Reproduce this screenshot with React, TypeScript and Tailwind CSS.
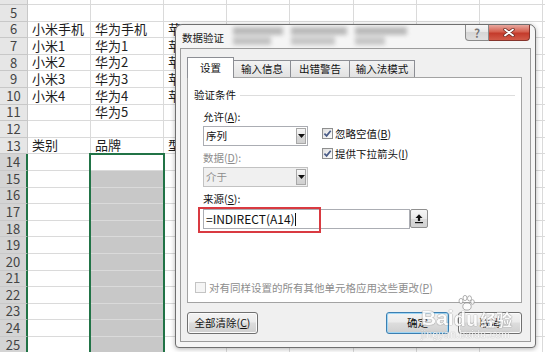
import React from 'react';

type Row = { n: number; a?: string; b?: string; c?: string };

// column C sits under the dialog, only the first glyph shows
const rows: Row[] = [
  { n: 5 },
  { n: 6, a: '小米手机', b: '华为手机', c: '苹' },
  { n: 7, a: '小米1', b: '华为1', c: '苹' },
  { n: 8, a: '小米2', b: '华为2', c: '苹' },
  { n: 9, a: '小米3', b: '华为3', c: '苹' },
  { n: 10, a: '小米4', b: '华为4', c: '苹' },
  { n: 11, b: '华为5' },
  { n: 12 },
  { n: 13, a: '类别', b: '品牌', c: '型' },
  { n: 14 }, { n: 15 }, { n: 16 }, { n: 17 }, { n: 18 }, { n: 19 },
  { n: 20 }, { n: 21 }, { n: 22 }, { n: 23 }, { n: 24 }, { n: 25 },
];

// columns D..I, all empty
const restCols = ['w-[63px]', 'w-[64px]', 'w-[63px]', 'w-[63px]', 'w-[63px]', 'w-[63px]'];

const cjk = "font-['Noto_Sans_CJK_SC','Noto_Sans',sans-serif]";

const Cell: React.FC<{ w: string; text?: string; fill?: boolean }> = ({ w, text, fill }) => (
  <div
    className={`${w} shrink-0 h-full border-r border-b border-[#dadada] flex items-end pl-[4px] whitespace-nowrap text-[13px] leading-[16px] text-[#1e1e1e] ${fill ? 'bg-[#c8c8c8]' : ''}`}
  >
    {text}
  </div>
);

const Dropdown: React.FC<{ text: string; disabled?: boolean }> = ({ text, disabled }) => (
  <div
    className={`h-[20px] w-[105px] flex border ${disabled ? 'border-[#c2c2c2] bg-[#f0f0f0] text-[#8d8d8d]' : 'border-[#abadb3] bg-white text-[#111]'}`}
  >
    <div className="flex-1 flex items-center pl-[2px] leading-[14px]">{text}</div>
    <div className="my-px mr-px w-[10px] border border-[#a8a8a8] bg-[linear-gradient(#f6f6f6,#e8e8e8_50%,#d9d9d9_50%,#d0d0d0)] flex items-center justify-center">
      <svg width="7" height="4" viewBox="0 0 7 4">
        <path d="M0 0H7L3.5 4Z" fill="#111" />
      </svg>
    </div>
  </div>
);

const Check: React.FC<{ checked?: boolean; disabled?: boolean }> = ({ checked, disabled }) => (
  <div
    className={`w-[11px] h-[11px] shrink-0 border flex items-center justify-center ${disabled ? 'border-[#c4c4c4] bg-[#f5f5f5]' : 'border-[#8e8f8f] bg-[linear-gradient(135deg,#dedede,#ffffff)]'}`}
  >
    {checked && (
      <svg width="9" height="9" viewBox="0 0 9 9">
        <path d="M1.4 4.6L3.6 6.9L7.7 1.7" fill="none" stroke="#4b5d88" strokeWidth="1.7" />
      </svg>
    )}
  </div>
);

const btnBg = 'bg-[linear-gradient(#f3f3f3,#ebebeb_45%,#dddddd_50%,#cfcfcf)]';

const App: React.FC = () => {
  return (
    <div className={`relative w-[545px] h-[352px] overflow-hidden bg-white ${cjk}`}>
      {/* spreadsheet */}
      <div className="flex flex-col">
        <div className="flex h-[5px]">
          <div className="w-[28px] shrink-0 h-full bg-[#e6e6e6] border-r border-b border-[#c8c8c8]" />
          <Cell w="w-[63px]" />
          <Cell w="w-[73px]" />
          <Cell w="w-[63px]" />
          {restCols.map((w, i) => (
            <Cell key={i} w={w} />
          ))}
        </div>
        {rows.map((r) => {
          const sel = r.n >= 14;
          return (
            <div key={r.n} className="flex h-[16.6px]">
              <div
                className={`w-[28px] shrink-0 h-full border-b border-[#c8c8c8] flex items-center justify-center text-[13px] leading-[16px] text-[#444] ${sel ? 'bg-[#d4d4d4] border-r-2 border-r-[#217346]' : 'bg-[#e6e6e6] border-r'}`}
              >
                {r.n}
              </div>
              <Cell w="w-[63px]" text={r.a} />
              <Cell w="w-[73px]" text={r.b} fill={r.n >= 15} />
              <Cell w="w-[63px]" text={r.c} />
              {restCols.map((w, i) => (
                <Cell key={i} w={w} />
              ))}
            </div>
          );
        })}
      </div>

      {/* selection B14:B25 */}
      <div className="absolute left-[89px] top-[153px] w-[76px] h-[220px] border-2 border-[#217346]" />

      {/* data validation dialog */}
      <div className="absolute left-[175px] top-[24px] w-[361px] h-[324px] rounded-t-[7px] rounded-b-[4px] border border-[#6f6f6f] bg-[#f5f5f5] shadow-[0_1px_5px_rgba(0,0,0,0.3)] flex flex-col text-[10.5px] text-[#111]">
        <div className="h-[23px] flex items-start">
          <span className="mt-[6px] ml-[6px] leading-[14px] text-[10.5px] text-[#1a1a1a]">数据验证</span>
          <div className="ml-[9px] mt-[2px] flex gap-[8px] opacity-55">
            <div className="flex flex-col gap-[2px] blur-[2px]">
              <div className="h-[8px] w-[50px] bg-[#8a8a8a]" />
              <div className="h-[8px] w-[38px] bg-[#9a9a9a]" />
            </div>
            <div className="flex flex-col gap-[2px] blur-[2px]">
              <div className="h-[8px] w-[56px] bg-[#8a8a8a]" />
              <div className="h-[8px] w-[44px] bg-[#a0a0a0]" />
            </div>
            <div className="flex flex-col gap-[2px] blur-[2px]">
              <div className="h-[8px] w-[52px] bg-[#8a8a8a]" />
              <div className="h-[8px] w-[30px] bg-[#a0a0a0]" />
            </div>
          </div>
          <div className="ml-auto mr-[5px] flex">
            <div className="w-[24px] h-[16px] border border-t-0 border-[#8a8a8a] rounded-bl-[4px] bg-[linear-gradient(#f7f7f7,#e6e6e6_50%,#d6d6d6_50%,#e0e0e0)] flex items-center justify-center">
              <span className="text-[12px] leading-[12px] font-bold text-[#777] [text-shadow:0_0_1px_#fff]">?</span>
            </div>
            <div className="w-[41px] h-[16px] border border-t-0 border-l-0 border-[#86342c] rounded-br-[4px] bg-[linear-gradient(#e8a89f,#d5604f_45%,#c43b2b_55%,#d25a48)] flex items-center justify-center">
              <svg width="12" height="9" viewBox="0 0 12 9">
                <path d="M2 1.5L10 7.5M10 1.5L2 7.5" stroke="#6b2a22" strokeWidth="3.4" strokeLinecap="round" />
                <path d="M2 1.5L10 7.5M10 1.5L2 7.5" stroke="#ffffff" strokeWidth="1.8" strokeLinecap="round" />
              </svg>
            </div>
          </div>
        </div>

        <div className="mx-[4px] h-[294px] border border-[#9b9b9b] bg-[#f0f0f0] pt-[8px] pl-[6px]">
          {/* tabs */}
          <div className="flex items-end h-[20px]">
            <div className="relative z-10 -mb-px w-[47px] h-[21px] border border-b-0 border-[#8c8e94] bg-white flex items-center justify-center leading-[14px]">
              设置
            </div>
            <div className="-ml-px w-[58px] h-[17px] border border-b-0 border-[#8c8e94] bg-[linear-gradient(#f3f3f3,#e2e2e2)] flex items-center justify-center leading-[14px]">
              输入信息
            </div>
            <div className="-ml-px w-[60px] h-[17px] border border-b-0 border-[#8c8e94] bg-[linear-gradient(#f3f3f3,#e2e2e2)] flex items-center justify-center leading-[14px]">
              出错警告
            </div>
            <div className="-ml-px w-[66px] h-[17px] border border-b-0 border-[#8c8e94] bg-[linear-gradient(#f3f3f3,#e2e2e2)] flex items-center justify-center leading-[14px]">
              输入法模式
            </div>
          </div>

          {/* tab panel */}
          <div className="w-[335px] h-[226px] border border-[#a3a3a3] bg-white flex flex-col">
            <div className="mt-[10px] h-[14px] pl-[6px] flex items-center">
              <span className="leading-[14px]">验证条件</span>
              <div className="flex-1 h-px bg-[#dddddd] ml-[4px] mr-[6px]" />
            </div>

            <div className="flex pl-[15px] mt-[8px]">
              <div className="w-[105px] flex flex-col">
                <div className="h-[14px] leading-[14px]">
                  允许(<span className="underline">A</span>):
                </div>
                <div className="mt-[2px]">
                  <Dropdown text="序列" />
                </div>
                <div className="mt-[5px] h-[14px] leading-[14px] text-[#8d8d8d]">
                  数据(<span className="underline">D</span>):
                </div>
                <div className="mt-[2px]">
                  <Dropdown text="介于" disabled />
                </div>
                <div className="mt-[5px] h-[14px] leading-[14px]">
                  来源(<span className="underline">S</span>):
                </div>
              </div>
              <div className="ml-[14px] pt-[18px] flex flex-col">
                <div className="flex items-center h-[11px]">
                  <Check checked />
                  <span className="ml-[2px] leading-[14px]">
                    忽略空值(<span className="underline">B</span>)
                  </span>
                </div>
                <div className="mt-[9px] flex items-center h-[11px]">
                  <Check checked />
                  <span className="ml-[2px] leading-[14px]">
                    提供下拉箭头(<span className="underline">I</span>)
                  </span>
                </div>
              </div>
            </div>

            <div className="relative mt-[3px] pl-[15px] flex items-start">
              <div className="w-[207px] h-[20px] border border-[#abadb3] bg-white flex items-center pl-[2px] text-[12px] leading-[14px] text-[#111]">
                =INDIRECT(A14)
                <span className="w-px h-[13px] bg-[#111]" />
              </div>
              <div className="w-[18px] h-[19px] border border-[#8f8f8f] rounded-[2px] bg-[linear-gradient(#f6f6f6,#e9e9e9_50%,#dadada_50%,#d2d2d2)] flex items-center justify-center">
                <svg width="10" height="11" viewBox="0 0 10 11">
                  <path d="M1.5 5L5 1.2L8.5 5Z" fill="#111" />
                  <rect x="3.9" y="4.5" width="2.2" height="3.4" fill="#111" />
                  <rect x="1" y="9" width="8" height="1.2" fill="#111" />
                </svg>
              </div>
              <div className="absolute left-[10px] -top-[2px] w-[123px] h-[26px] border-2 border-[#d93a41]" />
            </div>

            <div className="mt-[53px] pl-[7px] flex items-center h-[11px]">
              <Check disabled />
              <span className="ml-[3px] leading-[14px] text-[#8d8d8d]">
                对有同样设置的所有其他单元格应用这些更改(<span className="underline">P</span>)
              </span>
            </div>
          </div>

          {/* buttons */}
          <div className="w-[335px] mt-[9px] flex h-[22px]">
            <div className={`w-[71px] h-[22px] rounded-[3px] border border-[#707070] ${btnBg} shadow-[inset_0_0_0_1px_#fbfbfb] flex items-center justify-center leading-[14px]`}>
              全部清除(<span className="underline">C</span>)
            </div>
            <div className="flex-1" />
            <div className={`w-[63px] h-[22px] rounded-[3px] border border-[#3c7fb1] ${btnBg} shadow-[inset_0_0_0_1px_#9fd6f5] flex items-center justify-center leading-[14px]`}>
              确定
            </div>
            <div className={`ml-[9px] w-[64px] h-[22px] rounded-[3px] border border-[#707070] ${btnBg} shadow-[inset_0_0_0_1px_#fbfbfb] flex items-center justify-center leading-[14px]`}>
              取消
            </div>
          </div>
        </div>

        {/* watermark */}
        <div className="absolute left-[245px] top-[270px] flex flex-col items-start text-white opacity-85 pointer-events-none">
          <div className="flex items-end h-[34px] [text-shadow:0_0_1px_#777,0_0_1px_#777]">
            <span className="font-['Liberation_Sans',sans-serif] font-bold text-[21px] leading-[22px]">Bai</span>
            <div className="relative flex flex-col items-center">
              <svg width="18" height="16" viewBox="0 0 18 16" className="mb-[-2px]">
                <g fill="#fff" stroke="#8a8a8a" strokeWidth="0.8">
                  <ellipse cx="4" cy="6" rx="2" ry="2.6" />
                  <ellipse cx="8" cy="3" rx="2" ry="2.6" />
                  <ellipse cx="12.5" cy="3.4" rx="2" ry="2.6" />
                  <ellipse cx="15.5" cy="7" rx="1.8" ry="2.3" />
                  <ellipse cx="10" cy="11.5" rx="4.2" ry="3.6" />
                </g>
              </svg>
              <span className="font-['Liberation_Sans',sans-serif] font-bold text-[20px] leading-[20px]">du</span>
            </div>
            <span className="ml-[2px] text-[16px] leading-[20px] font-bold">经验</span>
          </div>
          <span className="mt-[1px] font-['Liberation_Sans',sans-serif] text-[10px] leading-[10px] tracking-[0.5px] [text-shadow:0_0_1px_#777]">
            jingyan.baidu.com
          </span>
        </div>
      </div>
    </div>
  );
};

export default App;
